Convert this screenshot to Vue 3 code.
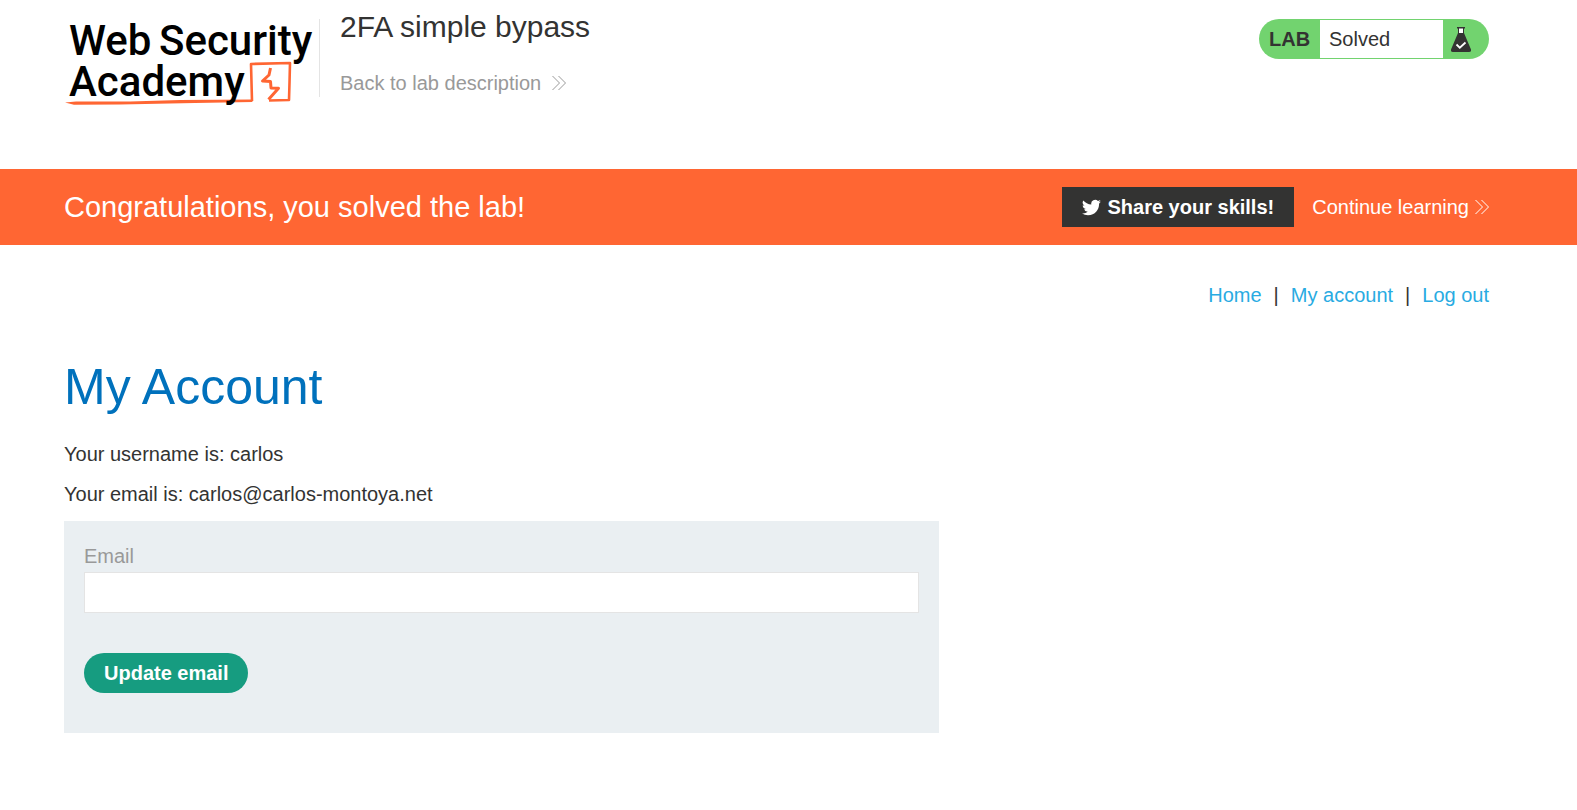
<script setup>
import { ref } from 'vue'

const email = ref('')
const links = ['Home', 'My account', 'Log out']
</script>

<template>
  <div class="page">
    <header class="top wrap">
      <a class="logo" href="#" aria-label="Web Security Academy">
        <svg width="252" height="92" viewBox="64 17 252 92">
          <g fill="none" stroke="#ff6633" stroke-linejoin="round">
            <path d="M252 101 L251 64 L290 63 L289.500 83 L289 100 L269 100.500" stroke-width="2.600" />
            <path d="M270.500 68 L269 75 L262.500 81 L270.500 81.500 L271 88 L278.500 88.300 L268.500 99.500" stroke-width="3" />
          </g>
          <path d="M65 102.500 L76 101.500 L130 101.500 L180 100 L252 99.500 L252.500 102 L195 103 L120 104.500 L74 104.800 Z" fill="#ff6633" />
          <text class="wordmark">
            <tspan x="69" y="55">Web</tspan><tspan x="159" y="55">Security</tspan><tspan x="69" y="96">Academy</tspan>
          </text>
        </svg>
      </a>
      <div class="titles">
        <h2>2FA simple bypass</h2>
        <a class="back" href="#">Back to lab description
          <svg class="chev" width="14" height="16" viewBox="0 0 14 16"><path d="M.500 1l7 7-7 7M6.500 1l7 7-7 7" /></svg>
        </a>
      </div>
      <div class="badge">
        <strong>LAB</strong>
        <span class="state">Solved</span>
        <span class="flask">
          <svg width="20" height="25" viewBox="0 0 20 25">
            <path d="M6 0h8v1.500h-1V6l7 16.500q.500 2.500-2 2.500H2q-2.500 0-2-2.500L7 6V1.500H6z" fill="#333332" />
            <path d="M8 1.500h4V6H8z" fill="#fff" />
            <path d="M5.500 17.500l3.300 3.200 5.700-5.200" fill="none" stroke="#fff" stroke-width="1.800" />
          </svg>
        </span>
      </div>
    </header>

    <section class="banner">
      <div class="wrap banner-row">
        <p class="congrats">Congratulations, you solved the lab!</p>
        <button class="share" type="button">
          <svg width="19" height="17" viewBox="0 2 24 20"><path fill="#fff" d="M23.950 4.570a10 10 0 0 1-2.820.770 4.960 4.960 0 0 0 2.160-2.720c-.950.560-2 .960-3.120 1.180a4.920 4.920 0 0 0-8.390 4.480C7.690 8.100 4.070 6.130 1.640 3.160a4.920 4.920 0 0 0 1.520 6.570 4.900 4.900 0 0 1-2.230-.610v.060a4.920 4.920 0 0 0 3.950 4.830 5 5 0 0 1-2.210.080 4.940 4.940 0 0 0 4.600 3.420A9.870 9.870 0 0 1 0 19.540a13.990 13.990 0 0 0 7.550 2.210c9.050 0 14-7.500 14-13.980 0-.210 0-.420-.020-.630a9.940 9.940 0 0 0 2.420-2.570z" /></svg>
          <span>Share your skills!</span>
        </button>
        <a class="continue" href="#">Continue learning
          <svg class="chev" width="14" height="16" viewBox="0 0 14 16"><path d="M.500 1l7 7-7 7M6.500 1l7 7-7 7" /></svg>
        </a>
      </div>
    </section>

    <main class="wrap">
      <nav class="nav">
        <template v-for="(link, i) in links" :key="link">
          <span v-if="i">|</span>
          <a href="#">{{ link }}</a>
        </template>
      </nav>
      <h1>My Account</h1>
      <p class="line">Your username is: carlos</p>
      <p class="line">Your email is: carlos@carlos-montoya.net</p>
      <form class="form" @submit.prevent>
        <label for="email">Email</label>
        <input id="email" v-model="email" type="email" />
        <button type="submit">Update email</button>
      </form>
    </main>
  </div>
</template>

<style>
body {
  margin: 0;
  background: #fff;
}
</style>

<style scoped>
.page {
  font-family: "Liberation Sans", Arial, sans-serif;
  font-size: 20px;
  line-height: 20px;
  color: #333332;
}
.page * {
  box-sizing: border-box;
}
a {
  text-decoration: none;
}
h1,
h2,
p {
  margin: 0;
  font-weight: 400;
}
button {
  border: 0;
  font: inherit;
  font-weight: 700;
  color: #fff;
  cursor: pointer;
}
svg {
  display: block;
  flex: none;
}
.wrap {
  padding: 0 88px 0 64px;
}
.top {
  display: flex;
  align-items: flex-start;
  min-height: 169px;
}
.logo {
  margin-top: 17px;
}
.wordmark {
  font-family: Roboto, sans-serif;
  font-size: 42px;
  font-weight: 500;
  fill: #000;
}
.titles {
  margin: 19px 0 0 3px;
  padding-left: 20px;
  border-left: 1px solid #e4e4e4;
  height: 78px;
}
.titles h2 {
  margin-top: -10px;
  font-size: 30px;
  line-height: 36px;
}
.back,
.continue {
  display: flex;
  align-items: center;
}
.back {
  gap: 11px;
  margin-top: 28px;
  color: #999;
}
.chev {
  fill: none;
  stroke: currentColor;
  stroke-width: 1;
}
.badge {
  display: flex;
  align-items: center;
  width: 230px;
  height: 40px;
  margin: 19px 0 0 auto;
  padding: 1px 0;
  border-radius: 20px;
  background: #72d36f;
}
.badge strong {
  width: 61px;
  padding-left: 10px;
}
.state {
  flex: 1;
  height: 38px;
  padding-left: 9px;
  line-height: 38px;
  background: #fff;
}
.flask {
  width: 46px;
  padding-left: 8px;
}
.banner {
  background: #ff6633;
  color: #fff;
}
.banner-row {
  display: flex;
  align-items: center;
  min-height: 76px;
}
.congrats {
  flex: 1;
  font-size: 29px;
  line-height: 36px;
}
.share {
  display: flex;
  align-items: center;
  gap: 6px;
  height: 40px;
  padding: 0 20px;
  background: #333332;
}
.continue {
  gap: 6px;
  margin-left: 18px;
  color: #fff;
}
.nav {
  display: flex;
  justify-content: flex-end;
  gap: 12px;
  padding-top: 40px;
}
.nav a {
  color: #29abe2;
}
h1 {
  margin: 52px 0 27px;
  font-size: 50px;
  line-height: 60px;
  color: #0071bc;
}
.line {
  margin-bottom: 20px;
}
.form {
  display: flex;
  flex-direction: column;
  align-items: flex-start;
  max-width: 875px;
  margin-top: -3px;
  padding: 25px 20px 40px;
  background: #eaeff2;
}
.form label {
  color: #999;
}
.form input {
  width: 100%;
  height: 41px;
  margin: 6px 0 40px;
  padding: 0 10px;
  border: 1px solid #e4e4e4;
  font: inherit;
  background: #fff;
}
.form button {
  height: 40px;
  padding: 0 20px;
  border-radius: 20px;
  background: #169c80;
}
</style>
